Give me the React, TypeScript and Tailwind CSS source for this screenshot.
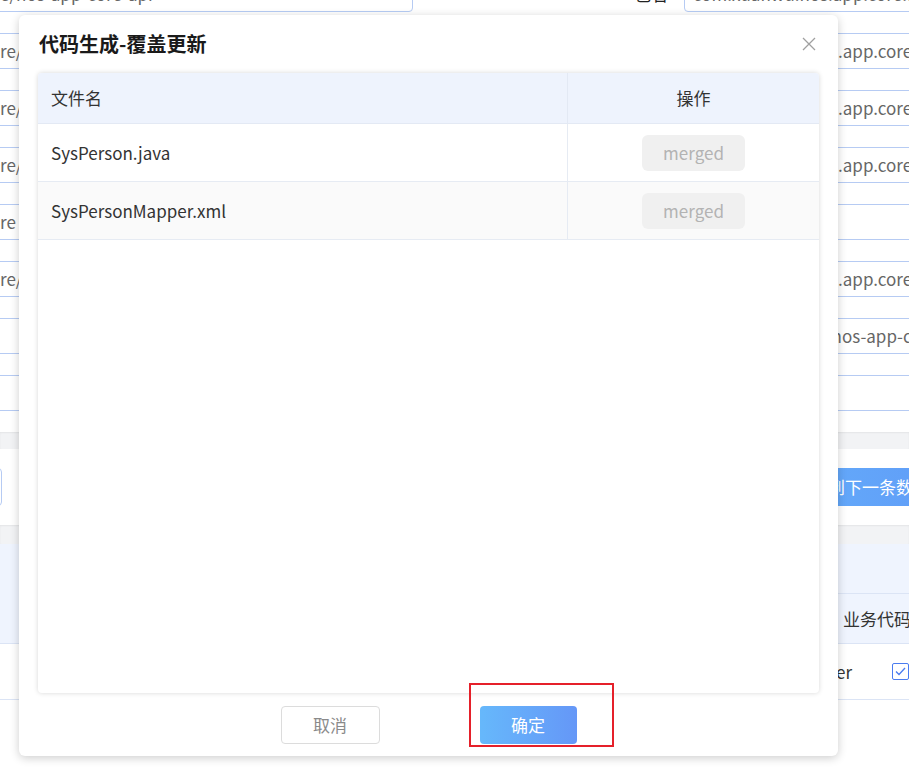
import React from 'react';

const rows = [
  { left: 'e/nos-app-core-api', label: '包名', right: 'com.xuanwu.nos.app.core.api' },
  { left: 're/nos-app-core', label: '包名', right: 'com.xuanwu.nos.app.core' },
  { left: 're/nos-app-core', label: '包名', right: 'com.xuanwu.nos.app.core' },
  { left: 're/nos-app-core', label: '包名', right: 'com.xuanwu.nos.app.core' },
  { left: 're', label: '包名', right: '' },
  { left: 're/nos-app-core', label: '包名', right: 'com.xuanwu.nos.app.core' },
  { left: '', label: '模块', right: 'xuanwu-cloud1-nos-app-core' },
  { left: '', label: '', right: '' },
];

const files = ['SysPerson.java', 'SysPersonMapper.xml'];

// Close icon for the dialog header
const CloseIcon = () => (
  <svg width="14" height="14" viewBox="0 0 14 14" fill="none" stroke="#a0a0a0" strokeWidth="1.3">
    <path d="M1 1L13 13M13 1L1 13" />
  </svg>
);

// Background page behind the dialog (form + table, partly hidden)
const BackgroundPage = () => (
  <div className="flex flex-col">
    {/* Form rows */}
    <div className="-mt-[24px] flex flex-col gap-[21px]">
      {rows.map((r, i) => (
        <div key={i} className="flex h-[36px]">
          <div className="-ml-[20px] flex w-[433px] shrink-0 items-center rounded border border-[#b6cbf3] bg-white pl-[19px] text-[17px] text-[#666]">
            <span className="whitespace-nowrap">{r.left}</span>
          </div>
          <div className="flex w-[271px] shrink-0 items-center justify-end pr-4 text-[17px] text-[#222]">{r.label}</div>
          <div
            className={`flex w-[400px] shrink-0 items-center rounded border border-[#b6cbf3] bg-white text-[17px] text-[#666] ${i === 0 ? 'pl-2' : 'pl-[18px]'}`}
          >
            <span className="whitespace-nowrap">{r.right}</span>
          </div>
        </div>
      ))}
    </div>

    <div className="mt-[21px] h-[17px] bg-[#f2f3f5] shadow-[inset_0_1px_2px_rgba(0,0,0,0.06)]" />

    {/* Action bar */}
    <div className="flex h-[76px] items-center">
      <div className="-ml-[80px] h-[38px] w-[82px] shrink-0 rounded border border-[#b6cbf3] bg-white" />
      <div className="ml-[727px] flex h-[38px] w-[300px] shrink-0 items-center rounded bg-gradient-to-r from-[#66b1fb] to-[#5e95f6] pl-[14px] text-[17px] text-white">
        <span className="whitespace-nowrap">保存并跳转到下一条数据</span>
      </div>
    </div>

    <div className="h-[19px] bg-[#f2f3f5] shadow-[inset_0_1px_2px_rgba(0,0,0,0.06)]" />

    {/* Table */}
    <div className="bg-[#eff4fe]">
      <div className="flex h-[50px] items-center">
        <div className="w-[760px] shrink-0" />
        <div className="flex h-full flex-1 items-center border-b border-[#dbe4f5] text-[17px] text-[#333]">
          <span className="-ml-[65px] whitespace-nowrap">生成配置</span>
        </div>
      </div>
      <div className="flex h-[50px] items-center border-b border-[#dbe4f5] pl-[843px] text-[17px] text-[#333]">
        <span className="whitespace-nowrap">业务代码</span>
      </div>
    </div>
    <div className="flex h-[56px] items-center border-b border-[#dbe4f5] bg-white">
      <div className="flex w-[852px] shrink-0 justify-end text-[17px] text-[#333]">SysPersonMapper</div>
      <div className="ml-[40px] flex h-[17px] w-[17px] shrink-0 items-center justify-center rounded-[2px] border border-[#4a7cf0]">
        <svg width="11" height="9" viewBox="0 0 11 9" fill="none" stroke="#4a7cf0" strokeWidth="1.3">
          <path d="M1 4.5L4 7.5L10 1" />
        </svg>
      </div>
    </div>
  </div>
);

const App = () => {
  return (
    <div className="relative h-[784px] w-[909px] overflow-hidden bg-white font-['Noto_Sans_CJK_SC','Liberation_Sans',sans-serif]">
      <BackgroundPage />

      {/* Dialog */}
      <div className="absolute left-[19px] top-[15px] flex h-[741px] w-[819px] flex-col rounded-md bg-white shadow-[0_2px_10px_rgba(0,0,0,0.2)]">
        <div className="flex h-[58px] items-center justify-between pl-5 pr-[22px]">
          <h2 className="text-[20px] font-bold text-[#1a1a1a]">代码生成-覆盖更新</h2>
          <CloseIcon />
        </div>

        <div className="mx-[19px] h-[620px] overflow-hidden rounded bg-white shadow-[0_0_5px_rgba(0,0,0,0.16)]">
          <div className="flex h-[51px] border-b border-[#e3e9f4] bg-[#eef3fd] text-[17px] text-[#333]">
            <div className="flex w-[530px] items-center border-r border-[#e3e9f4] pl-[13px]">文件名</div>
            <div className="flex flex-1 items-center justify-center">操作</div>
          </div>
          {files.map((f, i) => (
            <div
              key={f}
              className={`flex h-[58px] border-b border-[#e6ebf3] text-[17px] text-[#333] ${i % 2 === 1 ? 'bg-[#fafafa]' : 'bg-white'}`}
            >
              <div className="flex w-[530px] items-center border-r border-[#e6ebf3] pl-[13px]">{f}</div>
              <div className="flex flex-1 items-center justify-center">
                <span className="flex h-[36px] w-[103px] items-center justify-center rounded-md bg-[#f0f0f0] text-[17px] text-[#b3b3b3]">
                  merged
                </span>
              </div>
            </div>
          ))}
        </div>

        <div className="flex flex-1 items-center justify-center gap-[100px]">
          <button className="flex h-[38px] w-[99px] items-center justify-center rounded border border-[#dcdcdc] bg-white text-[17px] text-[#8a8a8a]">
            取消
          </button>
          <button className="flex h-[38px] w-[97px] items-center justify-center rounded bg-gradient-to-r from-[#66b8fb] to-[#6597f7] text-[17px] text-white">
            确定
          </button>
        </div>
      </div>

      {/* Red annotation box */}
      <div className="absolute left-[469px] top-[683px] h-[64px] w-[145px] border-2 border-[#e5202a]" />
    </div>
  );
};

export default App;
